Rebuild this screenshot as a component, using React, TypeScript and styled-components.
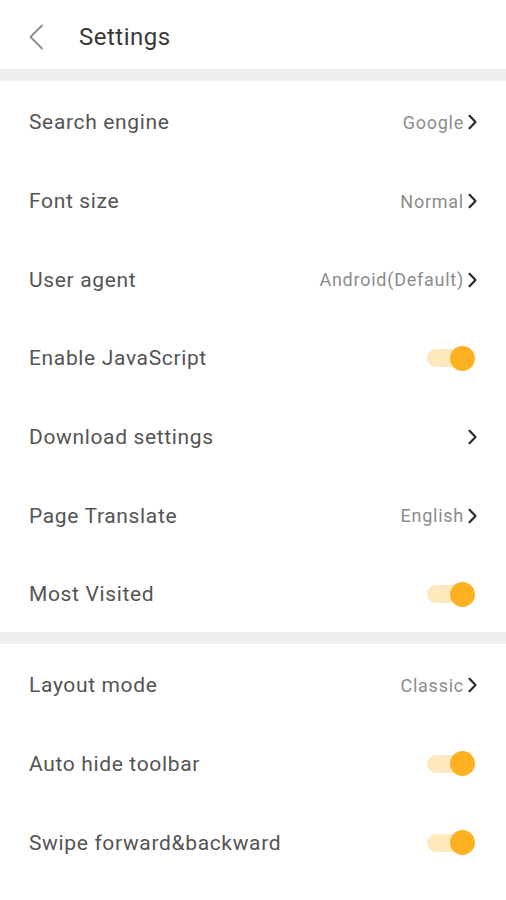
import React from "react";
import styled, { createGlobalStyle } from "styled-components";

const Global = createGlobalStyle`
  html, body { margin: 0; padding: 0; background: #ffffff; }
  body { font-family: Roboto, "Noto Sans", sans-serif; }
`;

const Page = styled.div`
  width: 506px;
  height: 900px;
  background: #ffffff;
  display: flex;
  flex-direction: column;
  overflow: hidden;
`;

const Header = styled.header`
  height: 69px;
  display: flex;
  align-items: center;
  padding: 5px 0 0 27px;
  gap: 34px;
  box-sizing: border-box;
`;

const Title = styled.h1`
  margin: 0;
  font-size: 24px;
  font-weight: 400;
  color: #383838;
  letter-spacing: 0.5px;
`;

const Divider = styled.div`
  height: 12px;
  background: #eeeeee;
  flex-shrink: 0;
`;

const Section = styled.section`
  display: flex;
  flex-direction: column;
  padding-top: 2px;
  margin-bottom: -2px;
`;

const Row = styled.div`
  height: 78.7px;
  display: flex;
  align-items: center;
  justify-content: space-between;
  padding: 0 28px 0 29px;
  box-sizing: border-box;
`;

const Label = styled.span`
  font-size: 21px;
  color: #545454;
  letter-spacing: 0.65px;
`;

const Right = styled.div`
  display: flex;
  align-items: center;
  gap: 3px;
`;

const Value = styled.span`
  font-size: 18px;
  color: #8c8c8c;
  letter-spacing: 0.75px;
`;

const Track = styled.div`
  position: relative;
  width: 44px;
  height: 18px;
  border-radius: 9px;
  background: #fde9bd;
  margin-right: 7px;
`;

const Knob = styled.div`
  position: absolute;
  right: -4px;
  top: 50%;
  width: 25px;
  height: 25px;
  margin-top: -12.5px;
  border-radius: 50%;
  background: #ffb221;
`;

const Back = () => (
  <svg width="18" height="26" viewBox="0 0 18 26" fill="none">
    <path d="M15 1.5 L3.5 13 L15 24.5" stroke="#8c8c8c" strokeWidth="1.8" strokeLinecap="round" strokeLinejoin="round" />
  </svg>
);

const Chevron = () => (
  <svg width="11" height="16" viewBox="0 0 11 16" fill="none">
    <path d="M2.5 1.8 L8.5 8 L2.5 14.2" stroke="#2a2a2a" strokeWidth="2.2" strokeLinecap="round" strokeLinejoin="round" />
  </svg>
);

type Item = { label: string; value?: string; toggle?: boolean };

const Toggle = () => (
  <Track>
    <Knob />
  </Track>
);

const SettingRow = ({ label, value, toggle }: Item) => (
  <Row>
    <Label>{label}</Label>
    {toggle ? (
      <Toggle />
    ) : (
      <Right>
        {value && <Value>{value}</Value>}
        <Chevron />
      </Right>
    )}
  </Row>
);

const first: Item[] = [
  { label: "Search engine", value: "Google" },
  { label: "Font size", value: "Normal" },
  { label: "User agent", value: "Android(Default)" },
  { label: "Enable JavaScript", toggle: true },
  { label: "Download settings" },
  { label: "Page Translate", value: "English" },
  { label: "Most Visited", toggle: true },
];

const second: Item[] = [
  { label: "Layout mode", value: "Classic" },
  { label: "Auto hide toolbar", toggle: true },
  { label: "Swipe forward&backward", toggle: true },
];

export default function App() {
  return (
    <Page>
      <Global />
      <Header>
        <Back />
        <Title>Settings</Title>
      </Header>
      <Divider />
      <Section>
        {first.map((it) => (
          <SettingRow key={it.label} {...it} />
        ))}
      </Section>
      <Divider />
      <Section>
        {second.map((it) => (
          <SettingRow key={it.label} {...it} />
        ))}
      </Section>
    </Page>
  );
}
